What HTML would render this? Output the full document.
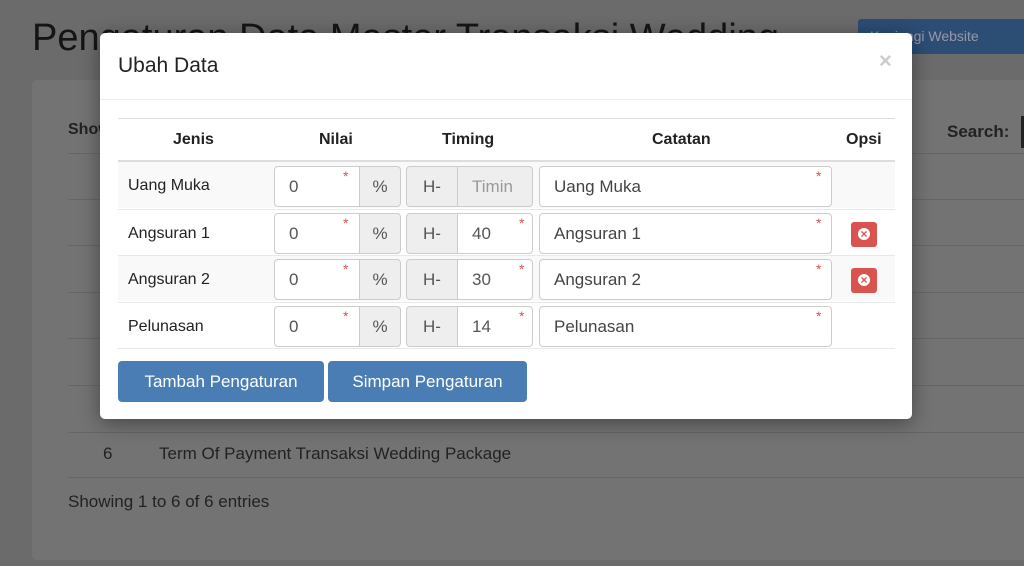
<!DOCTYPE html>
<html><head><style>
*{box-sizing:border-box;margin:0;padding:0}
body{width:1024px;height:566px;overflow:hidden;background:#6b6b6b;font-family:"Liberation Sans",sans-serif;position:relative;color:#222}
.abs{position:absolute}
.card{left:32px;top:80px;width:1000px;height:480px;background:#737373;border-radius:6px}
.hl{position:absolute;left:68px;width:960px;height:1px;background:#666}
.modal{left:100px;top:33px;width:812px;height:386px;background:#fff;border-radius:5px;box-shadow:0 4px 20px rgba(0,0,0,.4)}
.th{position:absolute;top:131px;font-weight:bold;font-size:16px;color:#222}
.row{position:absolute;left:18px;width:777px;height:46px;border-top:1px solid #e8e8e8}
.in{position:absolute;height:41px;border:1px solid #ccc;border-radius:4px;background:#fff;font-size:17px;color:#555;line-height:39px;padding-left:14px}
.ad{position:absolute;height:41px;border:1px solid #ccc;background:#eee;font-size:17px;color:#555;line-height:39px;text-align:center}
.st{position:absolute;color:#d9534f;font-size:14px;top:2px}
.lbl{position:absolute;left:10px;top:15px;font-size:16px;color:#222}
.del{position:absolute;left:733px;top:12px;width:26px;height:25px;background:#d9534f;border-radius:3px}
.del:after{content:"×";position:absolute;left:7px;top:6px;width:12px;height:12px;border-radius:50%;background:#fff;color:#d9534f;font-size:12px;line-height:12px;text-align:center;font-weight:bold}
.btn{position:absolute;top:328px;height:41px;background:#4a7db4;border-radius:4px;color:#fff;font-size:17px;line-height:41px;text-align:center}
</style></head><body>
<div class="abs" style="left:32px;top:17px;font-size:38px;color:#151515">Pengaturan Data Master Transaksi Wedding</div>
<div class="abs" style="left:858px;top:19px;width:170px;height:35px;background:#2c4d74;border-radius:3px;color:#99a;font-size:14px;line-height:35px;padding-left:12px">Kunjungi Website</div>
<div class="abs card"></div>
<div class="abs" style="left:68px;top:121px;font-weight:bold;font-size:16px">Show</div>
<div class="abs" style="left:947px;top:122px;font-weight:bold;font-size:17px">Search:</div>
<div class="abs" style="left:1021px;top:116px;width:3px;height:32px;background:#222"></div>
<div class="hl" style="top:153px"></div><div class="hl" style="top:199px"></div><div class="hl" style="top:245px"></div><div class="hl" style="top:292px"></div><div class="hl" style="top:338px"></div><div class="hl" style="top:385px"></div><div class="hl" style="top:432px"></div><div class="hl" style="top:477px"></div>
<div class="abs" style="left:103px;top:444px;font-size:17px">6</div>
<div class="abs" style="left:159px;top:444px;font-size:17px">Term Of Payment Transaksi Wedding Package</div>
<div class="abs" style="left:68px;top:492px;font-size:17px">Showing 1 to 6 of 6 entries</div>

<div class="abs modal">
<div class="abs" style="left:18px;top:21px;font-size:21px;color:#222">Ubah Data</div>
<div class="abs" style="left:779px;top:15px;font-size:22px;color:#ccc;font-weight:bold">×</div>
<div class="abs" style="left:0;top:66px;width:812px;height:1px;background:#eee"></div>
<div class="abs" style="left:18px;top:85px;width:777px;height:1px;background:#ddd"></div>
<div class="th" style="left:73px;top:98px">Jenis</div>
<div class="th" style="left:219px;top:98px">Nilai</div>
<div class="th" style="left:342px;top:98px">Timing</div>
<div class="th" style="left:552px;top:98px">Catatan</div>
<div class="th" style="left:746px;top:98px">Opsi</div>
<div class="abs" style="left:18px;top:127px;width:777px;height:2px;background:#ddd"></div>

<div class="row" style="top:129px;background:#f9f9f9;border-top:none">
<div class="lbl">Uang Muka</div>
<div class="in" style="left:156px;top:4px;width:86px;border-radius:4px 0 0 4px">0</div><div class="st" style="left:225px;top:6px">*</div>
<div class="ad" style="left:241px;top:4px;width:42px;border-radius:0 4px 4px 0">%</div>
<div class="ad" style="left:288px;top:4px;width:52px;border-radius:4px 0 0 4px">H-</div>
<div class="ad" style="left:339px;top:4px;width:76px;border-radius:0 4px 4px 0;color:#999;text-align:left;padding-left:14px">Timin</div>
<div class="in" style="left:421px;top:4px;width:293px;color:#444">Uang Muka</div><div class="st" style="left:698px;top:6px">*</div>
</div>
<div class="row" style="top:176px">
<div class="lbl">Angsuran 1</div>
<div class="in" style="left:156px;top:3px;width:86px;border-radius:4px 0 0 4px">0</div><div class="st" style="left:225px;top:5px">*</div>
<div class="ad" style="left:241px;top:3px;width:42px;border-radius:0 4px 4px 0">%</div>
<div class="ad" style="left:288px;top:3px;width:52px;border-radius:4px 0 0 4px">H-</div>
<div class="in" style="left:339px;top:3px;width:76px;border-radius:0 4px 4px 0">40</div><div class="st" style="left:401px;top:5px">*</div>
<div class="in" style="left:421px;top:3px;width:293px;color:#444">Angsuran 1</div><div class="st" style="left:698px;top:5px">*</div>
<div class="del"></div>
</div>
<div class="row" style="top:222px;background:#f9f9f9">
<div class="lbl">Angsuran 2</div>
<div class="in" style="left:156px;top:3px;width:86px;border-radius:4px 0 0 4px">0</div><div class="st" style="left:225px;top:5px">*</div>
<div class="ad" style="left:241px;top:3px;width:42px;border-radius:0 4px 4px 0">%</div>
<div class="ad" style="left:288px;top:3px;width:52px;border-radius:4px 0 0 4px">H-</div>
<div class="in" style="left:339px;top:3px;width:76px;border-radius:0 4px 4px 0">30</div><div class="st" style="left:401px;top:5px">*</div>
<div class="in" style="left:421px;top:3px;width:293px;color:#444">Angsuran 2</div><div class="st" style="left:698px;top:5px">*</div>
<div class="del"></div>
</div>
<div class="row" style="top:269px;border-bottom:1px solid #e8e8e8;height:47px">
<div class="lbl">Pelunasan</div>
<div class="in" style="left:156px;top:3px;width:86px;border-radius:4px 0 0 4px">0</div><div class="st" style="left:225px;top:5px">*</div>
<div class="ad" style="left:241px;top:3px;width:42px;border-radius:0 4px 4px 0">%</div>
<div class="ad" style="left:288px;top:3px;width:52px;border-radius:4px 0 0 4px">H-</div>
<div class="in" style="left:339px;top:3px;width:76px;border-radius:0 4px 4px 0">14</div><div class="st" style="left:401px;top:5px">*</div>
<div class="in" style="left:421px;top:3px;width:293px;color:#444">Pelunasan</div><div class="st" style="left:698px;top:5px">*</div>
</div>
<div class="btn" style="left:18px;width:206px">Tambah Pengaturan</div>
<div class="btn" style="left:228px;width:199px">Simpan Pengaturan</div>
</div>
</body></html>
